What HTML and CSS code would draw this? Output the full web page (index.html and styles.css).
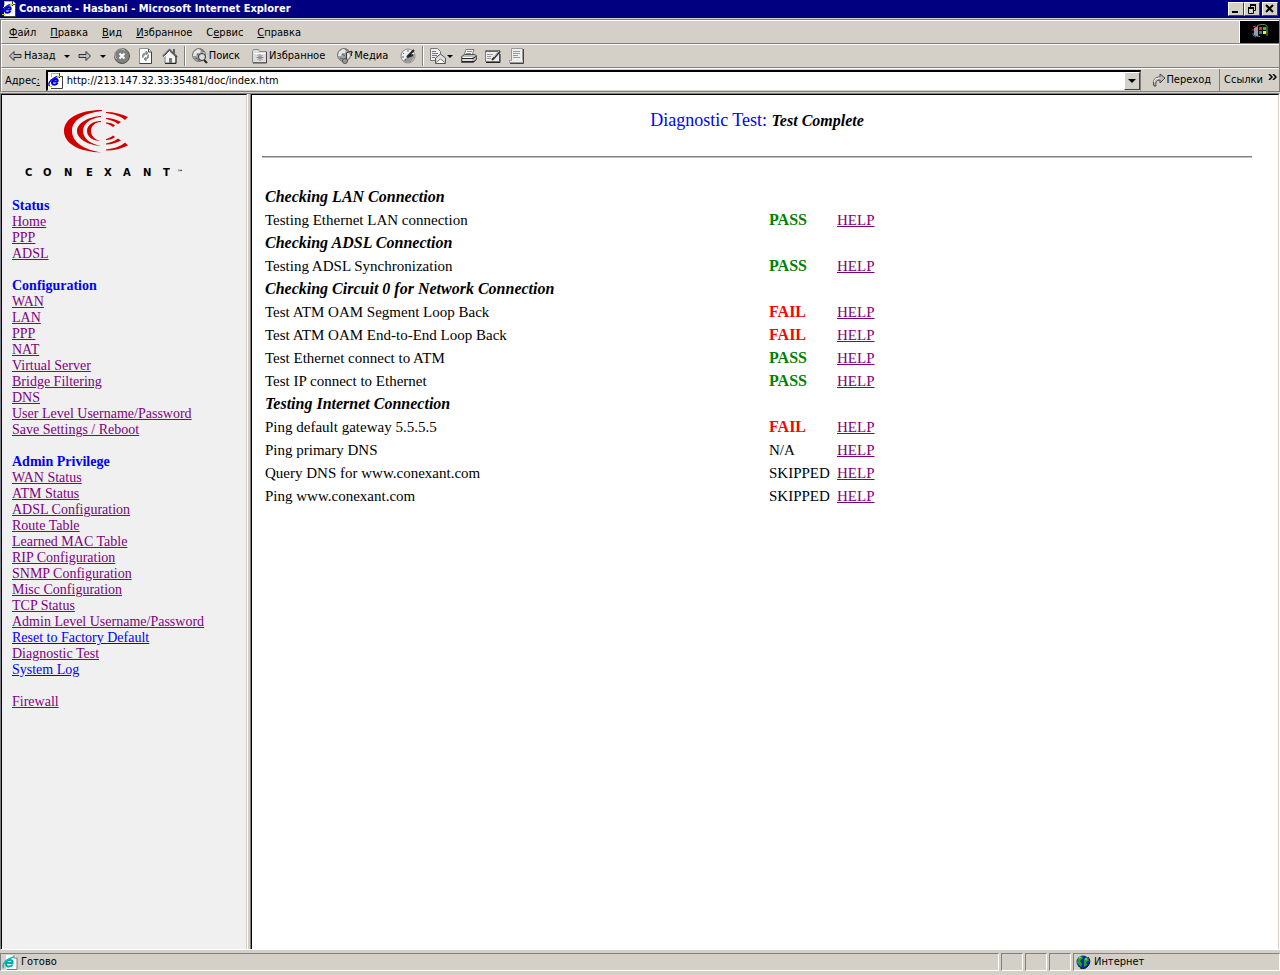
FILE: index.html
```html
<!DOCTYPE html>
<html lang="ru">
<head>
<meta charset="utf-8">
<title>Conexant - Hasbani</title>
<link rel="stylesheet" href="styles.css">
</head>
<body>
<svg class="defs" aria-hidden="true">
  <symbol id="ie" viewBox="0 0 16 16">
    <path d="M3 0h9l3 3v12H3z" fill="#fff"/><path d="M3 .5h9M3.500 1v3" stroke="#b0b0b0"/><path d="M11.500 0v3.500H15M14.500 3v12.500H3" fill="none" stroke="#404040"/>
    <path d="M9.500 10c-1 2-5 2.500-5.500 0C3.500 7.500 6 6 8 6c1.500 0 2 1 1.500 2.500H4.500" fill="none" stroke="#0000d0" stroke-width="2"/>
    <path d="M2 13C-1 12 2 7 6 5c3-2 6-2 5.500 0" fill="none" stroke="#0000d0" stroke-width="1.300"/><path d="M1 13.500h3M9 3.500h3M2 7l1-1" stroke="#d8d000"/>
  </symbol>
  <symbol id="globe" viewBox="0 0 16 16">
    <circle cx="7" cy="7" r="6.500" fill="#a0a0a0" stroke="#777"/><path d="M2 4l4-3 3 1-1 3H5L4 8 1 8zM9 6l3-2 1 4-2 3-2-2z" fill="#e8e8e8"/><path d="M3 10l3 1 1 2M8 1l4 3M5 6l3 2" stroke="#666" fill="none"/>
  </symbol>
</svg>

<header class="titlebar">
  <svg class="icon"><use href="#ie"/></svg>
  <h1 class="title">Conexant - Hasbani - Microsoft Internet Explorer</h1>
  <div class="wincontrols">
    <button class="winbtn" aria-label="Свернуть"><svg viewBox="0 0 12 10"><path d="M2 8h6" stroke="#000" stroke-width="2"/></svg></button>
    <button class="winbtn" aria-label="Восстановить"><svg viewBox="0 0 12 10"><path d="M4 1h6M2 4h6" stroke="#000" stroke-width="2"/><path d="M4.500 2v2M9.500 2v4.500H8M2.500 5v4.500h5V5" fill="none" stroke="#000"/></svg></button>
    <button class="winbtn winclose" aria-label="Закрыть"><svg viewBox="0 0 12 10"><path d="M2 1l7 7M9 1L2 8" stroke="#000" stroke-width="2"/></svg></button>
  </div>
</header>

<div class="chrome">
  <div class="bar">
    <nav class="menu">
      <button><u>Ф</u>айл</button><button><u>П</u>равка</button><button><u>В</u>ид</button><button><u>И</u>збранное</button><button>С<u>е</u>рвис</button><button><u>С</u>правка</button>
    </nav>
    <div class="throbber"><svg viewBox="0 0 16 16"><path d="M2 4l4-2v11l-4-2z" fill="#99a"/><path d="M1 3l3-1M1 5v2" stroke="#e22"/><path d="M1 9v2l3 2" stroke="#28f" fill="none"/><path d="M7 3h3v3H7z" fill="#e22"/><path d="M11 3h3v3h-3z" fill="#3b3"/><path d="M7 7h3v3H7z" fill="#08a"/><path d="M11 7h3v3h-3z" fill="#ee2"/><path d="M5 2c3-2 9-2 10 0v8" fill="none" stroke="#696"/><path d="M6 12l3 1M15 7v6" stroke="#997820" stroke-dasharray="2 1"/></svg></div>
  </div>

  <div class="bar tools">
    <button class="tool back"><svg class="arrow" viewBox="0 0 14 14"><path d="M1.500 7L6 2.500v3h7v3H6v3z" fill="#bbb" stroke="#333"/></svg>Назад</button>
    <button class="drop" aria-label="Список назад"><i class="caret"></i></button>
    <button class="tool" aria-label="Вперед"><svg class="arrow" viewBox="0 0 14 14"><path d="M12.500 7L8 2.500v3H1v3h7v3z" fill="#bbb" stroke="#333"/></svg></button>
    <button class="drop" aria-label="Список вперед"><i class="caret"></i></button>
    <button class="tool" aria-label="Остановить"><svg class="icon" viewBox="0 0 16 16"><circle cx="8" cy="8" r="7.500" fill="#808080" stroke="#505050"/><path d="M2.500 11A6 6 0 0 1 11 2.500" stroke="#c8c8c8" fill="none"/><path d="M5.500 5.500l5 5M10.500 5.500l-5 5" stroke="#fff" stroke-width="2"/></svg></button>
    <button class="tool" aria-label="Обновить"><svg class="icon" viewBox="0 0 16 16"><path d="M1.500.5h9l3 3v12h-12z" fill="#fff" stroke="#909090"/><path d="M10.500 1v3h3v11.500h-12" fill="none" stroke="#404040"/><path d="M8 5c-4 0-4 3-3 5M8 3v4l2-2zM8 11c3 0 3-3 2-5M8 9v4l-2-2z" fill="#909090" stroke="#909090"/></svg></button>
    <button class="tool" aria-label="Домой"><svg class="icon" viewBox="0 0 16 16"><path d="M11 1h2v5h-2z" fill="#606060"/><path d="M3 8l5-6 6 6v7H3z" fill="#f4f4f4" stroke="#808080"/><path d="M1 8.500L7.500 2 15 9" fill="none" stroke="#606060" stroke-width="2"/><path d="M2 9l6-6" stroke="#fff"/><path d="M7 10h3v5H7z" fill="#777"/><path d="M14 8v7.500H3" fill="none" stroke="#222"/></svg></button>
    <span class="sep"></span>
    <button class="tool wide"><svg class="icon" viewBox="0 0 16 16"><use href="#globe" width="16" height="16"/><circle cx="10" cy="9" r="3.500" fill="#ddd" stroke="#333"/><path d="M12 12l3 3" stroke="#222" stroke-width="2"/></svg>Поиск</button>
    <button class="tool wide"><svg class="icon" viewBox="0 0 16 16"><path d="M.5 3.500l1-2h5l1 2h7v11H.5z" fill="#ddd" stroke="#888"/><path d="M2 5.500h11" stroke="#fff"/><path d="M14.500 4v11H1" fill="none" stroke="#444"/><path d="M8 6v7M4.500 9.500h7M5.500 7l5 5M10.500 7l-5 5" stroke="#888"/></svg>Избранное</button>
    <button class="tool wide"><svg class="icon" viewBox="0 0 16 16"><use href="#globe" width="16" height="16"/><path d="M9.500 13V5l5-2v5M14.500 3l1 2" fill="none" stroke="#333"/><circle cx="8" cy="13" r="2.500" fill="#999" stroke="#555"/></svg>Медиа</button>
    <button class="tool" aria-label="Журнал"><svg class="icon" viewBox="0 0 16 16"><circle cx="8" cy="8" r="7" fill="#eee" stroke="#888"/><path d="M8 8l6-2v4l-3 4-5 1-3-2z" fill="#999"/><path d="M7 9l7-7M7 9l6-2" stroke="#222" stroke-width="2"/><path d="M8 2v2M3 5l1 1M2 9h2M5 13l1-2" stroke="#666"/></svg></button>
    <span class="sep"></span>
    <button class="tool" aria-label="Почта"><svg class="icon" viewBox="0 0 16 16"><path d="M.5.500h7l3 3v9H.5z" fill="#eee" stroke="#777"/><path d="M2 3.500h4M2 5.500h6M2 7.500h5M2 9.500h3" stroke="#777"/><path d="M5.500 10l5-4 5 4v5.500h-10z" fill="#ddd" stroke="#555"/><path d="M5.500 15l5-4 5 4" fill="#fff" stroke="#777"/></svg><i class="caret"></i></button>
    <button class="tool" aria-label="Печать"><svg class="icon" viewBox="0 0 16 16"><path d="M5 1.500h8l-2 6H3z" fill="#fff" stroke="#777"/><path d="M6 3.500h5M5 5.500h5" stroke="#888"/><path d="M.5 8.500l3-2h10l2 1v4l-3 3H.5z" fill="#bbb" stroke="#555"/><path d="M1 10.500h11l3-2M1 13.500h12l2-2" stroke="#222" fill="none"/><path d="M2 9.500h9M2 12h9" stroke="#fff"/></svg></button>
    <button class="tool" aria-label="Правка"><svg class="icon" viewBox="0 0 16 16"><path d="M.5 2.500h14v11H.5z" fill="#eee" stroke="#777"/><path d="M1 3.500h13" stroke="#666"/><path d="M2 6.500h6M2 8.500h4M2 10.500h4" stroke="#999"/><path d="M15 3l-6 7-2 2" stroke="#333" stroke-width="2"/><path d="M14 3l-5 6" stroke="#ccc"/><path d="M1 14.500h14V6" fill="none" stroke="#222"/></svg></button>
    <button class="tool" aria-label="Обсуждение"><svg class="icon" viewBox="0 0 16 16"><path d="M2.500.5h11v11l1 3H.5v-2h2z" fill="#eee" stroke="#999"/><path d="M4 3.500h7M4 5.500h7M4 7.500h5M4 9.500h7" stroke="#999"/><path d="M14.500 1v14.500H1" fill="none" stroke="#444"/></svg></button>
  </div>

  <div class="bar address">
    <label for="url">Адрес<u>:</u></label>
    <div class="field">
      <svg class="icon"><use href="#ie"/></svg>
      <input id="url" type="text" value="http://213.147.32.33:35481/doc/index.htm">
      <button class="combo" aria-label="Показать адреса"><i class="caret big"></i></button>
    </div>
    <button class="go"><svg class="arrow" viewBox="0 0 14 14"><path d="M2 13C0 7 3 4 8 4V1l5 4-5 5V7C5 7 3 9 4 13z" fill="#bbb" stroke="#444"/><path d="M2 9c0-3 3-4 6-4" stroke="#fff" fill="none"/></svg>Переход</button>
    <button class="links">Ссылки<svg class="chev" viewBox="0 0 9 6"><path d="M1 0l3 3-3 3M5 0l3 3-3 3" fill="none" stroke="#000" stroke-width="1.500"/></svg></button>
  </div>
</div>

<div class="frames">
  <aside class="sidebar">
    <svg class="logo" viewBox="0 0 170 72" role="img" aria-label="Conexant">
      <g fill="#d00000">
        <path d="M90 3C66 3 52 12 52 24S66 45 90 45.500C72 43 60 35 60 24S72 6 90 4z"/>
        <path d="M89 9C76 10 65 16 65 24s11 14 24 15c-11-2-18-8-18-15s7-13 18-14z"/>
        <path d="M89 14c-8 0-14 4-14 10s6 10 14 10c-6-1-10-5-10-10s4-9 10-9z"/>
        <g id="fins"><path d="M94 5c8 0 16 2 22 5l-3 3c-5-4-11-6-19-7z"/><path d="M94 11c6 0 11 2 15 4l-3 2c-4-3-8-4-12-5z"/><path d="M94 15.500c4 0 7 1 9 3l-2 1.500c-2-2-5-3-7-3.500z"/></g>
        <use href="#fins" transform="matrix(1 0 0 -1 0 48.500)"/>
      </g>
      <text class="wordmark" y="69" x="13 31 52 74 92 111 131 151">CONEXANT</text>
      <text class="tm" x="165" y="67">™</text>
    </svg>
    <nav class="group">
      <h2>Status</h2>
      <a href="#">Home</a><a href="#">PPP</a><a href="#">ADSL</a>
    </nav>
    <nav class="group">
      <h2>Configuration</h2>
      <a href="#">WAN</a><a href="#">LAN</a><a href="#">PPP</a><a href="#">NAT</a><a href="#">Virtual Server</a><a href="#">Bridge Filtering</a><a href="#">DNS</a><a href="#">User Level Username/Password</a><a href="#">Save Settings / Reboot</a>
    </nav>
    <nav class="group">
      <h2>Admin Privilege</h2>
      <a href="#">WAN Status</a><a href="#">ATM Status</a><a href="#">ADSL Configuration</a><a href="#">Route Table</a><a href="#">Learned MAC Table</a><a href="#">RIP Configuration</a><a href="#">SNMP Configuration</a><a href="#">Misc Configuration</a><a href="#">TCP Status</a><a href="#">Admin Level Username/Password</a><a href="#" class="fresh">Reset to Factory Default</a><a href="#">Diagnostic Test</a><a href="#" class="fresh">System Log</a>
    </nav>
    <nav class="group"><a href="#">Firewall</a></nav>
  </aside>
  <div class="splitter"></div>
  <main class="content">
    <h2 class="heading">Diagnostic Test: <em>Test Complete</em></h2>
    <hr>
    <table class="results">
      <colgroup><col class="c-name"><col class="c-result"><col></colgroup>
      <tr><th colspan="3">Checking LAN Connection</th></tr>
      <tr><td>Testing Ethernet LAN connection</td><td class="pass">PASS</td><td><a href="#">HELP</a></td></tr>
      <tr><th colspan="3">Checking ADSL Connection</th></tr>
      <tr><td>Testing ADSL Synchronization</td><td class="pass">PASS</td><td><a href="#">HELP</a></td></tr>
      <tr><th colspan="3">Checking Circuit 0 for Network Connection</th></tr>
      <tr><td>Test ATM OAM Segment Loop Back</td><td class="fail">FAIL</td><td><a href="#">HELP</a></td></tr>
      <tr><td>Test ATM OAM End-to-End Loop Back</td><td class="fail">FAIL</td><td><a href="#">HELP</a></td></tr>
      <tr><td>Test Ethernet connect to ATM</td><td class="pass">PASS</td><td><a href="#">HELP</a></td></tr>
      <tr><td>Test IP connect to Ethernet</td><td class="pass">PASS</td><td><a href="#">HELP</a></td></tr>
      <tr><th colspan="3">Testing Internet Connection</th></tr>
      <tr><td>Ping default gateway 5.5.5.5</td><td class="fail">FAIL</td><td><a href="#">HELP</a></td></tr>
      <tr><td>Ping primary DNS</td><td>N/A</td><td><a href="#">HELP</a></td></tr>
      <tr><td>Query DNS for www.conexant.com</td><td>SKIPPED</td><td><a href="#">HELP</a></td></tr>
      <tr><td>Ping www.conexant.com</td><td>SKIPPED</td><td><a href="#">HELP</a></td></tr>
    </table>
  </main>
</div>

<footer class="status">
  <div class="panel grow"><svg class="icon" viewBox="0 0 16 16"><path d="M4 1h8l3 3v11H4z" fill="#fff"/><path d="M12 1v3h3v11.500H5" fill="none" stroke="#777"/><path d="M10.500 10.500c-1 2.500-6 3-6.500 0C3.500 7.500 6 6 8 6c2 0 3 1 2.500 3H5" fill="none" stroke="#0aa" stroke-width="2"/><path d="M2 14C-1 12 3 5 12 3" fill="none" stroke="#0bb" stroke-width="1.500"/></svg>Готово</div>
  <div class="panel small"></div><div class="panel small"></div><div class="panel small"></div>
  <div class="panel zone"><svg class="icon" viewBox="0 0 16 16"><circle cx="8" cy="8" r="6.500" fill="#1020c0"/><path d="M3 4l4-2 1 2-3 3 2 3-1 3-4-4zM9 5l3-2 2 4-3 1 1 3-3 2z" fill="#20a820"/><path d="M4 4l2-1M10 5h2" stroke="#8f8"/><path d="M13 3a7 7 0 0 1-8 11" fill="none" stroke="#012"/></svg>Интернет</div>
</footer>
</body>
</html>
```

FILE: styles.css
```css
* { box-sizing: border-box; }
body {
  margin: 0;
  min-height: 100vh;
  display: flex;
  flex-direction: column;
  background: #d4d0c8;
  color: #000;
  font: 11px/14px "DejaVu Sans Condensed", "DejaVu Sans", sans-serif;
}
button, input { font: inherit; color: inherit; margin: 0; padding: 0; border: 0; background: none; }
.defs { position: absolute; width: 0; height: 0; }
.icon { width: 16px; height: 16px; flex: none; }
.arrow { width: 14px; height: 14px; flex: none; }

.titlebar { display: flex; align-items: center; height: 18px; padding: 0 2px 0 1px; background: #000080; color: #fff; gap: 2px; }
.title { flex: 1; margin: 0; font-size: 11px; font-weight: bold; white-space: nowrap; }
.wincontrols { display: flex; }
.winbtn {
  width: 16px; height: 14px; display: flex; align-items: center; justify-content: center;
  background: #d4d0c8; border: 1px solid; border-color: #fff #404040 #404040 #fff;
}
.winbtn svg { width: 12px; height: 10px; }
.winclose { margin-left: 2px; }

.chrome { margin-top: 1px; border: 1px solid #808080; border-bottom: 0; }
.bar {
  display: flex; align-items: center; height: 24px;
  border-top: 1px solid #fff; border-left: 1px solid #fff; border-bottom: 1px solid #808080;
}
.menu { flex: 1; display: flex; padding-top: 1px; }
.menu button { padding: 0 7px; }
.throbber {
  width: 40px; height: 22px; display: flex; align-items: center; justify-content: center;
  background: #000; border-left: 1px solid #fff;
}
.throbber svg { width: 16px; height: 16px; }

.tools { padding-left: 2px; }
.tool { display: flex; align-items: center; gap: 1px; padding: 0 4px; white-space: nowrap; }
.wide { margin-right: 4px; }
.back { gap: 2px; }
.drop { width: 14px; height: 16px; display: flex; align-items: center; justify-content: center; }
.caret { border: solid transparent; border-width: 3px 3px 0; border-top-color: #000; }
.caret.big { border-width: 4px 4px 0; }
.sep { width: 2px; height: 20px; margin: 0 2px; border-left: 1px solid #808080; border-right: 1px solid #fff; }

.address { padding-left: 3px; }
.address label { padding-top: 1px; }
.field {
  flex: 1; display: flex; align-items: center; height: 21px; margin-left: 6px; gap: 3px;
  background: #fff; border: solid; border-width: 2px 1px 1px 2px; border-color: #000 #808080 #d4d0c8 #000;
}
.field input { flex: 1; min-width: 0; outline: 0; }
.combo {
  width: 16px; height: 18px; display: flex; align-items: center; justify-content: center;
  background: #d4d0c8; border: 1px solid; border-color: #fff #404040 #404040 #fff;
}
.go { display: flex; align-items: center; gap: 0; padding: 0 8px 0 11px; }
.links { align-self: stretch; display: flex; align-items: center; gap: 5px; padding: 0 2px 0 4px; border-left: 1px solid #808080; }
.chev { width: 9px; height: 6px; margin-bottom: 6px; }

.frames {
  flex: 1; display: flex; margin-top: 1px;
  border: 1px solid; border-color: #808080 #fff #fff #808080;
  font-family: "Liberation Serif", "Times New Roman", serif;
}
.sidebar { width: 246px; flex: none; padding: 12px 10px; background: #f0f0f0; border-top: 1px solid #000; border-left: 1px solid #000; border-right: 1px solid #d4d0c8; font-size: 14px; line-height: 16px; }
.logo { display: block; width: 170px; height: 72px; overflow: visible; }
.wordmark { font: bold 10px "DejaVu Sans", sans-serif; }
.tm { font: bold 6px "DejaVu Sans", sans-serif; }
.group { display: flex; flex-direction: column; align-items: flex-start; margin-bottom: 16px; }
.logo + .group { margin-top: 19px; }
.group h2 { margin: 0; font-size: 14px; line-height: 16px; color: #00f; }
a { color: #800080; text-decoration: underline; }
a.fresh { color: #00f; }
.splitter { width: 4px; background: #d4d0c8; border-left: 1px solid #fff; border-right: 1px solid #808080; }
.content { flex: 1; min-width: 0; padding: 14px 26px 16px 10px; background: #fff; border-top: 1px solid #000; border-left: 1px solid #000; border-right: 1px solid #d4d0c8; font-size: 15px; }
.heading { margin: 0; font-size: 18px; line-height: 22px; font-weight: normal; color: #00f; text-align: center; }
.heading em { font-size: 16px; font-weight: bold; color: #000; }
hr { margin: 24px 0 27px; border: 0; border-top: 1px solid #808080; border-bottom: 1px solid #c0c0c0; }
.results { border-collapse: collapse; table-layout: fixed; width: 616px; }
.results td, .results th { height: 23px; padding: 0 0 0 3px; line-height: 20px; text-align: left; }
.results th { font-size: 16px; font-style: italic; }
.c-name { width: 504px; }
.c-result { width: 68px; }
.results .pass, .results .fail { font-size: 16px; font-weight: bold; }
.pass { color: #008000; }
.fail { color: #f00; }

.status { display: flex; gap: 2px; height: 25px; padding: 2px 0 4px; border-top: 1px solid #d4d0c8; }
.panel { display: flex; align-items: center; gap: 3px; padding-left: 1px; border: 1px solid; border-color: #808080 #fff #fff #808080; }
.grow { flex: 1; }
.small { width: 22px; }
.zone { width: 207px; }
```
